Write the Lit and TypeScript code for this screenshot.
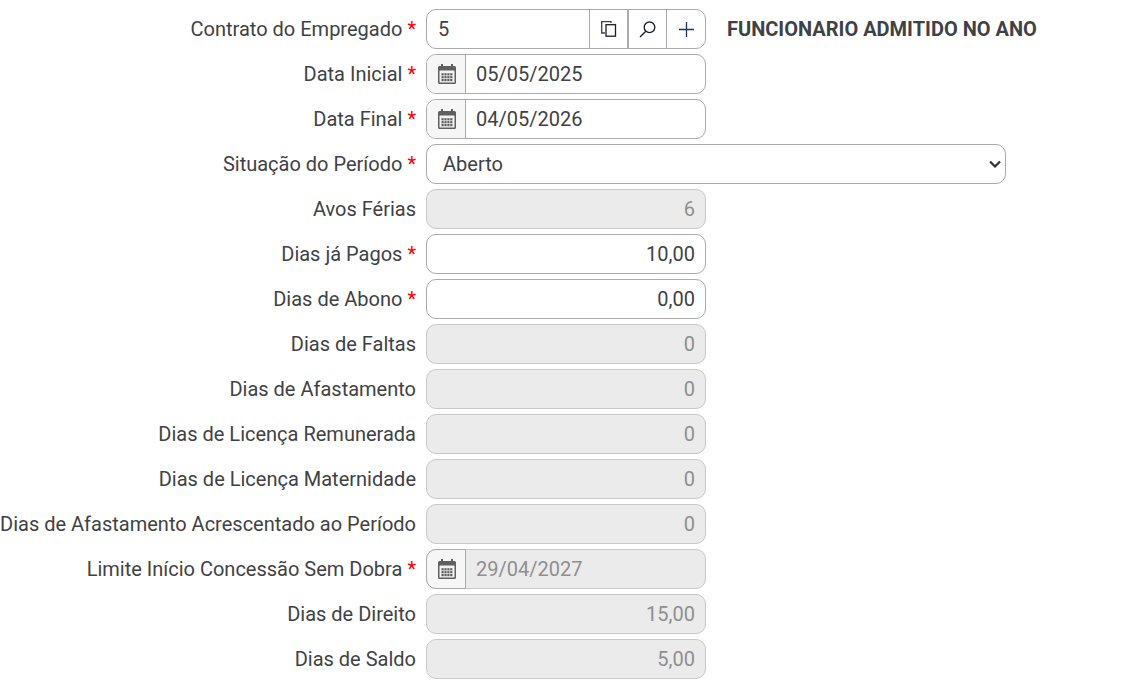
import { LitElement, html, css, svg } from "lit";
import { customElement } from "lit/decorators.js";

const calendar = html`<svg class="cal" width="18" height="20" viewBox="0 0 18 20"><path fill="#5f5f5f" d="M3 0h2v2h8V0h2v2h1.500A1.500 1.500 0 0 1 18 3.500v15a1.500 1.500 0 0 1-1.500 1.500h-15A1.500 1.500 0 0 1 0 18.500v-15A1.500 1.500 0 0 1 1.500 2H3z"/><rect x="1.500" y="6.500" width="15" height="12" rx="0.500" fill="#f3f3f3"/>${[0, 1, 2, 3].flatMap((c) => [0, 1, 2].map((r) => svg`<rect x="${3.5 + c * 2.9}" y="${9.2 + r * 2.9}" width="2.200" height="2.200" fill="#5f5f5f"/>`))}</svg>`;

type Row = { label: string; req?: boolean; kind: string; value: string };
const rows: Row[] = [
  { label: "Contrato do Empregado", req: true, kind: "contract", value: "5" },
  { label: "Data Inicial", req: true, kind: "date", value: "05/05/2025" },
  { label: "Data Final", req: true, kind: "date", value: "04/05/2026" },
  { label: "Situação do Período", req: true, kind: "select", value: "Aberto" },
  { label: "Avos Férias", kind: "off", value: "6" },
  { label: "Dias já Pagos", req: true, kind: "num", value: "10,00" },
  { label: "Dias de Abono", req: true, kind: "num", value: "0,00" },
  { label: "Dias de Faltas", kind: "off", value: "0" },
  { label: "Dias de Afastamento", kind: "off", value: "0" },
  { label: "Dias de Licença Remunerada", kind: "off", value: "0" },
  { label: "Dias de Licença Maternidade", kind: "off", value: "0" },
  { label: "Dias de Afastamento Acrescentado ao Período", kind: "off", value: "0" },
  { label: "Limite Início Concessão Sem Dobra", req: true, kind: "dateoff", value: "29/04/2027" },
  { label: "Dias de Direito", kind: "off", value: "15,00" },
  { label: "Dias de Saldo", kind: "off", value: "5,00" },
];

@customElement("app-root")
export class AppRoot extends LitElement {
  static styles = css`
    :host { display: block; width: 1122px; height: 688px; overflow: hidden; background: #fff; font-family: Roboto, sans-serif; font-size: 20px; color: #3f4245; }
    .form { display: grid; grid-template-columns: 416px 280px 1fr; column-gap: 10px; row-gap: 5px; padding-top: 9px; }
    .label { display: flex; align-items: center; justify-content: flex-end; white-space: nowrap; height: 40px; padding-bottom: 1px; box-sizing: border-box; }
    .star { color: #f00; margin-left: 5px; }
    .box { box-sizing: border-box; height: 40px; border: 1px solid #aaa; border-radius: 10px; display: flex; align-items: center; overflow: hidden; background: #fff; }
    .val { flex: 1; padding: 0 10px; }
    .contract .val { padding-left: 11px; }
    .right { justify-content: flex-end; text-align: right; }
    .off { background: #ebebeb; border-color: #c8c8c8; color: #8f8f8f; }
    .addon { box-sizing: border-box; width: 39px; height: 100%; display: flex; align-items: center; justify-content: center; border-left: 1px solid #aaa; flex: none; }
    .addon.first { width: 38px; }
    .addon.thick { border-left-width: 2px; }
    .cal-addon { box-sizing: border-box; width: 39px; height: 100%; display: flex; align-items: center; justify-content: center; border-right: 1px solid #aaa; background: #f6f6f6; flex: none; padding-left: 1px; }
    .dateoff { overflow: visible; }
    .dateoff .cal-addon { width: 40px; height: 40px; margin: -1px 0 -1px -1px; border: 1px solid #aaa; border-radius: 10px 0 0 10px; padding-left: 1px; }
    .select { grid-column: 2 / 4; width: 580px; padding: 0 4px 0 16px; justify-content: space-between; }
    .title { display: flex; align-items: center; font-weight: 700; padding-left: 11px; white-space: nowrap; padding-bottom: 1px; }
    .chev { display: block; }
  `;

  field(r: Row) {
    switch (r.kind) {
      case "contract":
        return html`<div class="box contract"><span class="val">${r.value}</span>
          <span class="addon first"><svg width="16" height="16" viewBox="0 0 16 16" fill="none" stroke-width="1.300"><path stroke="#33405f" d="M10 2V.7H.7V12H4"/><rect x="5" y="3.700" width="9.500" height="11.500" stroke="#1c1c2c"/></svg></span>
          <span class="addon thick"><svg width="17" height="17" viewBox="0 0 17 17" fill="none" stroke="#1d2430" stroke-width="1.400"><circle cx="10.500" cy="6.300" r="5.300"/><path d="M6.800 10.200L1 16"/></svg></span>
          <span class="addon"><svg width="15" height="15" viewBox="0 0 15 15" fill="none" stroke="#1f3650" stroke-width="1.300"><path d="M7.500 0v15M0 7.500h15"/></svg></span></div>
          <div class="title">FUNCIONARIO ADMITIDO NO ANO</div>`;
      case "date":
        return html`<div class="box"><span class="cal-addon">${calendar}</span><span class="val">${r.value}</span></div><div></div>`;
      case "dateoff":
        return html`<div class="box off dateoff"><span class="cal-addon">${calendar}</span><span class="val">${r.value}</span></div><div></div>`;
      case "select":
        return html`<div class="box select"><span>${r.value}</span><svg class="chev" width="12" height="8" viewBox="0 0 12 8" fill="none" stroke="#333" stroke-width="2.200"><path d="M1 1.500l5 5 5-5"/></svg></div>`;
      case "num":
        return html`<div class="box right"><span class="val">${r.value}</span></div><div></div>`;
      default:
        return html`<div class="box off right"><span class="val">${r.value}</span></div><div></div>`;
    }
  }

  render() {
    return html`<div class="form">${rows.map(
      (r) => html`<div class="label">${r.label}${r.req ? html`<span class="star">*</span>` : ""}</div>${this.field(r)}`
    )}</div>`;
  }
}
